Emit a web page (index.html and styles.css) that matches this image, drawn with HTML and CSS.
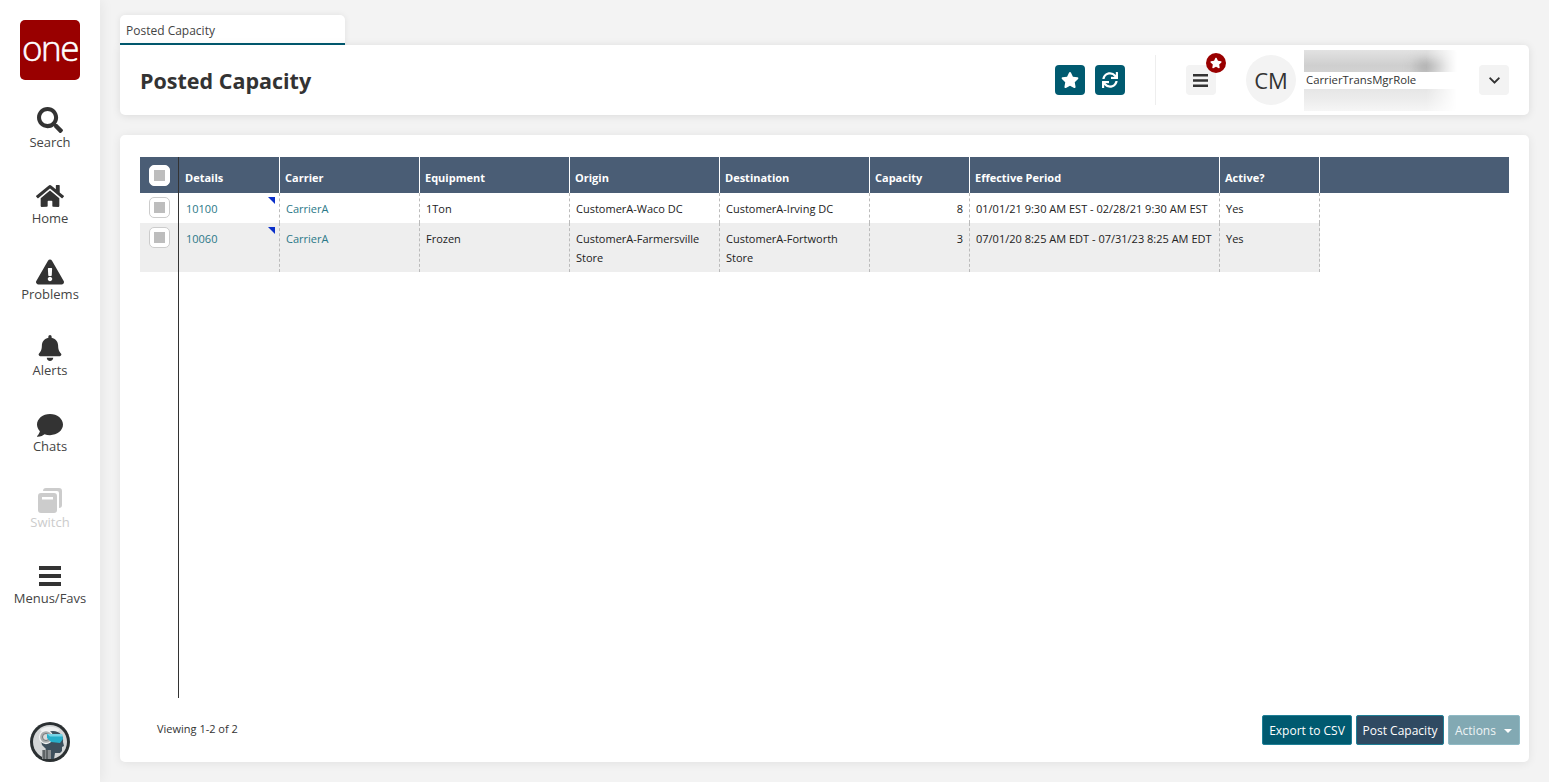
FILE: index.html
```html
<!DOCTYPE html>
<html lang="en">
<head>
<meta charset="utf-8">
<title>Posted Capacity</title>
<link rel="stylesheet" href="styles.css">
</head>
<body>
<nav class="sidebar">
  <div class="logo">one</div>
  <ul class="nav-list">
    <li class="nav-item"><svg class="nav-icon" viewBox="0 0 512 512"><path d="M505 442.7L405.3 343c-4.5-4.5-10.6-7-17-7H372c27.6-35.3 44-79.7 44-128C416 93.1 322.9 0 208 0S0 93.1 0 208s93.1 208 208 208c48.3 0 92.7-16.4 128-44v16.3c0 6.4 2.5 12.5 7 17l99.7 99.7c9.4 9.4 24.6 9.4 33.9 0l28.3-28.3c9.4-9.4 9.4-24.6.1-34zM208 336c-70.7 0-128-57.2-128-128 0-70.7 57.2-128 128-128 70.7 0 128 57.2 128 128 0 70.7-57.2 128-128 128z"/></svg><span>Search</span></li>
    <li class="nav-item"><svg class="nav-icon" viewBox="0 0 576 512"><path d="M280.37 148.26L96 300.11V464a16 16 0 0 0 16 16l112.06-.29a16 16 0 0 0 15.92-16V368a16 16 0 0 1 16-16h64a16 16 0 0 1 16 16v95.64a16 16 0 0 0 16 16.05L464 480a16 16 0 0 0 16-16V300L295.67 148.26a12.19 12.19 0 0 0-15.3 0zM571.6 251.47L488 182.56V44.05a12 12 0 0 0-12-12h-56a12 12 0 0 0-12 12v72.61L318.47 43a48 48 0 0 0-61 0L4.34 251.47a12 12 0 0 0-1.6 16.9l25.5 31A12 12 0 0 0 45.15 301l235.22-193.74a12.19 12.19 0 0 1 15.3 0L530.9 301a12 12 0 0 0 16.9-1.6l25.5-31a12 12 0 0 0-1.7-16.93z"/></svg><span>Home</span></li>
    <li class="nav-item"><svg class="nav-icon" viewBox="0 0 576 512"><path d="M569.517 440.013C587.975 472.007 564.806 512 527.94 512H48.054c-36.937 0-59.999-40.055-41.577-71.987L246.423 23.985c18.467-32.009 64.72-31.951 83.154 0l239.94 416.028zM288 354c-25.405 0-46 20.595-46 46s20.595 46 46 46 46-20.595 46-46-20.595-46-46-46zm-43.673-165.346l7.418 136c.347 6.364 5.609 11.346 11.982 11.346h48.546c6.373 0 11.635-4.982 11.982-11.346l7.418-136c.375-6.874-5.098-12.654-11.982-12.654h-63.383c-6.884 0-12.356 5.78-11.981 12.654z"/></svg><span>Problems</span></li>
    <li class="nav-item"><svg class="nav-icon" viewBox="0 0 448 512"><path d="M224 512c35.32 0 63.97-28.65 63.97-64H160.03c0 35.35 28.65 64 63.97 64zm215.39-149.71c-19.32-20.76-55.47-51.99-55.47-154.29 0-77.7-54.48-139.9-127.94-155.16V32c0-17.67-14.32-32-31.98-32s-31.98 14.33-31.98 32v20.84C118.56 68.1 64.08 130.3 64.08 208c0 102.3-36.15 133.53-55.47 154.29-6 6.45-8.66 14.16-8.61 21.71.11 16.4 12.98 32 32.1 32h383.8c19.12 0 32-15.6 32.1-32 .05-7.55-2.61-15.27-8.61-21.71z"/></svg><span>Alerts</span></li>
    <li class="nav-item"><svg class="nav-icon" viewBox="0 -28 512 512"><path d="M256 32C114.6 32 0 125.1 0 240c0 49.6 21.4 95 57 130.7C44.5 421.1 2.7 466 2.2 466.5c-2.2 2.3-2.8 5.7-1.5 8.7S4.8 480 8 480c66.3 0 116-31.8 140.6-51.4 32.7 12.3 69 19.4 107.4 19.4 141.4 0 256-93.1 256-208S397.4 32 256 32z"/></svg><span>Chats</span></li>
    <li class="nav-item nav-item-disabled"><svg class="nav-icon" viewBox="0 0 26 26"><path d="M9 1h13a3 3 0 0 1 3 3v14a3 3 0 0 1-3 3V6a2 2 0 0 0-2-2H6a3 3 0 0 1 3-3z"/><path d="M4 6h13a3 3 0 0 1 3 3v14a3 3 0 0 1-3 3H4a3 3 0 0 1-3-3V9a3 3 0 0 1 3-3zm1 4v2.500h11V10z" fill-rule="evenodd"/></svg><span>Switch</span></li>
    <li class="nav-item"><svg class="nav-icon" viewBox="0 0 26 26"><path d="M2 3h22v4H2zM2 11h22v4H2zM2 19h22v4H2z"/></svg><span>Menus/Favs</span></li>
  </ul>
  <svg class="bot" viewBox="0 0 40 40">
    <circle cx="20" cy="20" r="20" fill="#2b3032"/>
    <circle cx="20" cy="20" r="17" fill="#d4d6d7"/>
    <path d="M10 8a17 17 0 0 1 20 0l-4 3h-12z" fill="#eef0f0"/>
    <path d="M14 37v-7l2-3-4-4c-3-9 4-14 11-14 7 0 11 5 10 11l1 4-2 1 0 4-2 2-5 0-1 6z" fill="#3d4f5c"/>
    <path d="M12 37v-9h9v9z" fill="#8b8f91"/>
    <path d="M14 28v9M17 28v9" stroke="#33383a" stroke-width="1"/>
    <circle cx="16" cy="15" r="6.500" fill="#a9adae" stroke="#f2f3f3" stroke-width="1.300"/>
    <circle cx="16" cy="15" r="3.500" fill="#d9dbdb" stroke="#6f7476" stroke-width="1"/>
    <path d="M17 12h15l1 5-3 4-9-1-4-4z" fill="#27aec9"/>
    <path d="M17 12h15l.500 2.500H20z" fill="#77d4e6"/>
  </svg>
</nav>

<main class="main">
  <div class="tab-strip"><div class="tab">Posted Capacity</div></div>

  <header class="page-header">
    <h1 class="page-title">Posted Capacity</h1>
    <div class="header-tools">
      <button class="icon-btn"><svg class="icon-star" viewBox="0 0 576 512"><path d="M259.3 17.800L194 150.200 47.900 171.500c-26.200 3.800-36.700 36.100-17.700 54.600l105.700 103-25 145.500c-4.500 26.300 23.200 46 46.400 33.700L288 439.600l130.700 68.700c23.200 12.200 50.900-7.400 46.400-33.700l-25-145.500 105.700-103c19-18.500 8.500-50.800-17.700-54.600L382 150.200 316.700 17.800c-11.700-23.600-45.600-23.900-57.400 0z"/></svg></button>
      <button class="icon-btn"><svg class="icon-16" viewBox="0 0 512 512"><path d="M440.65 12.570l4 82.770A247.160 247.160 0 0 0 255.830 8C134.730 8 33.910 94.920 12.290 209.820A12 12 0 0 0 24.090 224h49.050a12 12 0 0 0 11.670-9.260 175.910 175.910 0 0 1 317-56.940l-101.460-4.860a12 12 0 0 0-12.570 12v47.410a12 12 0 0 0 12 12H500a12 12 0 0 0 12-12V12a12 12 0 0 0-12-12h-47.370a12 12 0 0 0-11.980 12.570zM255.830 432a175.610 175.610 0 0 1-146-77.800l101.800 4.870a12 12 0 0 0 12.570-12v-47.400a12 12 0 0 0-12-12H12a12 12 0 0 0-12 12V500a12 12 0 0 0 12 12h47.350a12 12 0 0 0 12-12.600l-4.150-82.570A247.170 247.170 0 0 0 255.830 504c121.110 0 221.930-86.920 243.550-201.820a12 12 0 0 0-11.800-14.180h-49.050a12 12 0 0 0-11.670 9.260A175.860 175.860 0 0 1 255.830 432z"/></svg></button>
      <div class="tool-divider"></div>
      <button class="menu-btn">
        <svg class="icon-menu" viewBox="0 0 15 13"><path d="M0 0h15v2.600H0zM0 5.200h15v2.600H0zM0 10.400h15V13H0z"/></svg>
        <span class="menu-badge"><svg class="icon-badge" viewBox="0 0 576 512"><path d="M259.3 17.800L194 150.200 47.900 171.500c-26.200 3.800-36.700 36.100-17.700 54.600l105.700 103-25 145.500c-4.500 26.300 23.200 46 46.400 33.700L288 439.600l130.700 68.700c23.200 12.200 50.900-7.400 46.400-33.700l-25-145.500 105.700-103c19-18.500 8.500-50.800-17.700-54.600L382 150.200 316.700 17.800c-11.700-23.600-45.600-23.900-57.400 0z"/></svg></span>
      </button>
      <div class="avatar">CM</div>
      <div class="user-block">
        <div class="blur-strip blur-strip-top"><span class="blur-ink"></span></div>
        <div class="user-role">CarrierTransMgrRole</div>
        <div class="blur-strip blur-strip-bottom"></div>
      </div>
      <button class="menu-btn chevron-btn"><svg class="icon-chevron" viewBox="0 0 448 512"><path d="M207.029 381.476L12.686 187.132c-9.373-9.373-9.373-24.569 0-33.941l22.667-22.667c9.357-9.357 24.522-9.375 33.901-.04L224 284.505l154.745-154.021c9.379-9.335 24.544-9.317 33.901.04l22.667 22.667c9.373 9.373 9.373 24.569 0 33.941L240.971 381.476c-9.373 9.372-24.569 9.372-33.942 0z"/></svg></button>
    </div>
  </header>

  <section class="content-card">
    <div class="table-wrap">
      <div class="frozen">
        <div class="frozen-head"><span class="check check-head"><i></i></span></div>
        <div class="frozen-row"><span class="check"><i></i></span></div>
        <div class="frozen-row frozen-row-tall"><span class="check"><i></i></span></div>
      </div>
      <div class="grid-pane">
        <div class="row row-head">
          <div class="cell">Details</div>
          <div class="cell">Carrier</div>
          <div class="cell">Equipment</div>
          <div class="cell">Origin</div>
          <div class="cell">Destination</div>
          <div class="cell">Capacity</div>
          <div class="cell">Effective Period</div>
          <div class="cell">Active?</div>
        </div>
        <div class="row row-body">
          <div class="cell cell-flag"><a>10100</a></div>
          <div class="cell"><a>CarrierA</a></div>
          <div class="cell">1Ton</div>
          <div class="cell">CustomerA-Waco DC</div>
          <div class="cell">CustomerA-Irving DC</div>
          <div class="cell cell-num">8</div>
          <div class="cell">01/01/21 9:30 AM EST - 02/28/21 9:30 AM EST</div>
          <div class="cell">Yes</div>
        </div>
        <div class="row row-body row-alt">
          <div class="cell cell-flag"><a>10060</a></div>
          <div class="cell"><a>CarrierA</a></div>
          <div class="cell">Frozen</div>
          <div class="cell">CustomerA-Farmersville Store</div>
          <div class="cell">CustomerA-Fortworth Store</div>
          <div class="cell cell-num">3</div>
          <div class="cell">07/01/20 8:25 AM EDT - 07/31/23 8:25 AM EDT</div>
          <div class="cell">Yes</div>
        </div>
      </div>
    </div>
    <footer class="card-footer">
      <div class="viewing">Viewing 1-2 of 2</div>
      <div class="actions">
        <button class="btn btn-teal">Export to CSV</button>
        <button class="btn btn-navy">Post Capacity</button>
        <button class="btn btn-muted">Actions<span class="caret"></span></button>
      </div>
    </footer>
  </section>
</main>
</body>
</html>
```

FILE: styles.css
```css
* { box-sizing: border-box; }
html, body { height: 100%; }
body {
  margin: 0;
  display: flex;
  height: 782px;
  overflow: hidden;
  background: #f3f3f3;
  font-family: "Open Sans", "Liberation Sans", sans-serif;
  color: #333;
}

/* Sidebar */
.sidebar {
  width: 100px;
  flex: none;
  background: #fff;
  display: flex;
  flex-direction: column;
  align-items: center;
  padding: 20px 0;
  box-shadow: 2px 0 12px rgba(0, 0, 0, .06);
}
.logo {
  width: 60px;
  height: 60px;
  background: #990000;
  border-radius: 5px;
  color: #fff;
  font-size: 35px;
  font-weight: 300;
  letter-spacing: -1.500px;
  line-height: 55px;
  text-align: center;
  -webkit-text-stroke: .6px #fff;
}
.nav-list {
  list-style: none;
  margin: 0;
  padding: 0;
  width: 100%;
  flex: 1;
  padding-top: 27px;
}
.nav-item {
  height: 76px;
  display: flex;
  flex-direction: column;
  align-items: center;
  font-size: 13px;
  line-height: 18px;
  color: #444;
}
.nav-icon {
  width: 28px;
  height: 26px;
  fill: #333;
}
.nav-item-disabled { color: #ccc; }
.nav-item-disabled .nav-icon { fill: #ccc; }
.bot { width: 40px; height: 40px; flex: none; }

/* Main column */
.main {
  flex: 1;
  min-width: 0;
  display: flex;
  flex-direction: column;
  padding: 15px 20px 20px;
}
.tab-strip { height: 30px; flex: none; }
.tab {
  width: 225px;
  height: 30px;
  background: #fff;
  border-radius: 5px 5px 0 0;
  border-bottom: 2px solid #005a70;
  padding: 7px 6px 0;
  font-size: 12px;
  line-height: 17px;
  color: #444;
  box-shadow: 0 0 6px rgba(0, 0, 0, .08);
}

/* Page header */
.page-header {
  height: 70px;
  flex: none;
  background: #fff;
  border-radius: 0 5px 5px 5px;
  box-shadow: 0 1px 8px rgba(0, 0, 0, .1);
  display: flex;
  align-items: center;
  justify-content: space-between;
  padding: 0 20px;
}
.page-title {
  margin: 0;
  font-size: 21.500px;
  font-weight: 700;
  color: #333;
}
.header-tools { display: flex; align-items: center; }
.icon-btn {
  width: 30px;
  height: 30px;
  border: 0;
  padding: 0;
  margin-right: 10px;
  background: #005a70;
  border-radius: 4px;
  display: flex;
  align-items: center;
  justify-content: center;
}
.icon-16 { width: 16px; height: 16px; fill: #fff; }
.icon-star { width: 18px; height: 16px; fill: #fff; }
.tool-divider {
  width: 1px;
  height: 50px;
  background: #eee;
  margin: 0 30px 0 20px;
}
.menu-btn {
  position: relative;
  width: 30px;
  height: 30px;
  border: 0;
  padding: 0;
  background: #f3f3f3;
  border-radius: 4px;
  display: flex;
  align-items: center;
  justify-content: center;
}
.icon-menu { width: 15px; height: 13px; margin-right: 2px; fill: #333; }
.menu-badge {
  position: absolute;
  top: -12px;
  right: -10px;
  width: 20px;
  height: 20px;
  border-radius: 50%;
  background: #990000;
  display: flex;
  align-items: center;
  justify-content: center;
}
.icon-badge { width: 12px; height: 12px; fill: #fff; }
.avatar {
  width: 50px;
  height: 50px;
  margin-left: 30px;
  border-radius: 50%;
  background: #f3f3f3;
  display: flex;
  align-items: center;
  justify-content: center;
  font-size: 22px;
  color: #333;
}
.user-block {
  width: 153px;
  margin-left: 8px;
  overflow: hidden;
}
.blur-strip {
  display: block;
  position: relative;
  height: 22px;
  overflow: hidden;
  -webkit-mask-image: linear-gradient(90deg, #000 80%, transparent 100%);
  mask-image: linear-gradient(90deg, #000 80%, transparent 100%);
}
.blur-strip-top {
  background: linear-gradient(180deg, #e2e2e2, #cfcfcf 70%, #d2d2d2);
}
.blur-strip-bottom {
  background: linear-gradient(180deg, #e6e6e6, #ececec 45%, #f6f6f6);
}
.blur-ink {
  position: absolute;
  display: block;
  left: 112px;
  bottom: 0;
  width: 30px;
  height: 10px;
  background: #a6a6a6;
  filter: blur(6px);
}
.user-role {
  height: 17px;
  padding-left: 2px;
  font-size: 11.350px;
  line-height: 15px;
  color: #333;
}
.chevron-btn { margin-left: 22px; }
.icon-chevron { width: 11px; height: 13px; fill: #333; }

/* Content card */
.content-card {
  flex: 1;
  min-height: 0;
  margin-top: 20px;
  background: #fff;
  border-radius: 5px;
  box-shadow: 0 1px 10px rgba(0, 0, 0, .08);
  padding: 22px 9px 17px 20px;
  display: flex;
  flex-direction: column;
}
.table-wrap {
  flex: 1;
  min-height: 0;
  display: flex;
  margin-right: 11px;
}
.frozen {
  width: 39px;
  flex: none;
  border-right: 1px solid #333;
}
.frozen-head {
  height: 36px;
  background: #4a5d75;
  padding: 8px 0 0 9px;
}
.frozen-row {
  height: 30px;
  padding: 4px 0 0 9px;
}
.frozen-row-tall {
  height: 49px;
  background: #eeeeee;
}
.check {
  display: flex;
  align-items: center;
  justify-content: center;
  width: 21px;
  height: 21px;
  background: #fff;
  border: 1px solid #ccc;
  border-radius: 5px;
}
.check i {
  display: block;
  width: 11px;
  height: 11px;
  background: #bdbdbd;
}
.check-head { border-color: #fff; }
.grid-pane { flex: 1; min-width: 0; }
.row {
  display: grid;
  grid-template-columns: 101px 140px 150px 150px 150px 100px 250px 100px;
  font-size: 11px;
  line-height: 19px;
}
.row-head {
  height: 36px;
  background: #4a5d75;
  color: #fff;
  font-weight: 700;
}
.row-head .cell {
  border-right: 1px solid #fff;
  padding: 12px 5px 0;
  line-height: 18px;
}
.row-head .cell:first-child { padding-left: 6px; }
.row-body { color: #222; width: 1141px; }
.row-body .cell {
  border-right: 1px dashed #bbb;
  padding: 6px 6px 0;
  min-height: 30px;
  position: relative;
}
.row-body .cell:first-child { padding-left: 7px; }
.row-alt { background: #eeeeee; height: 49px; }
.row-body a { color: #2b7888; }
.cell-num { text-align: right; }
.cell-flag::after {
  content: "";
  position: absolute;
  top: 4px;
  right: 4px;
  width: 0;
  height: 0;
  border-top: 7px solid #0a2fc9;
  border-left: 7px solid transparent;
}

/* Footer */
.card-footer {
  flex: none;
  height: 47px;
  display: flex;
  align-items: flex-start;
  justify-content: space-between;
  padding-top: 17px;
}
.viewing {
  font-size: 11px;
  line-height: 30px;
  margin: -1px 0 0 17px;
  color: #333;
}
.actions { display: flex; gap: 4px; }
.btn {
  height: 30px;
  border: 1px solid #1f7f96;
  border-radius: 2px;
  padding: 1px 0 0;
  white-space: nowrap;
  font: 12px/1 "Open Sans", "Liberation Sans", sans-serif;
  color: #fff;
}
.btn-teal { background: #005a70; width: 90px; }
.btn-navy { background: #2f4a62; width: 88px; }
.btn-muted {
  background: #82a9b3;
  border-color: #8fbac5;
  width: 72px;
  padding-left: 6px;
  color: #eef4f5;
  text-align: left;
}
.caret {
  display: inline-block;
  vertical-align: middle;
  margin-left: 8px;
  border-top: 4px solid #fff;
  border-left: 4px solid transparent;
  border-right: 4px solid transparent;
}
```
